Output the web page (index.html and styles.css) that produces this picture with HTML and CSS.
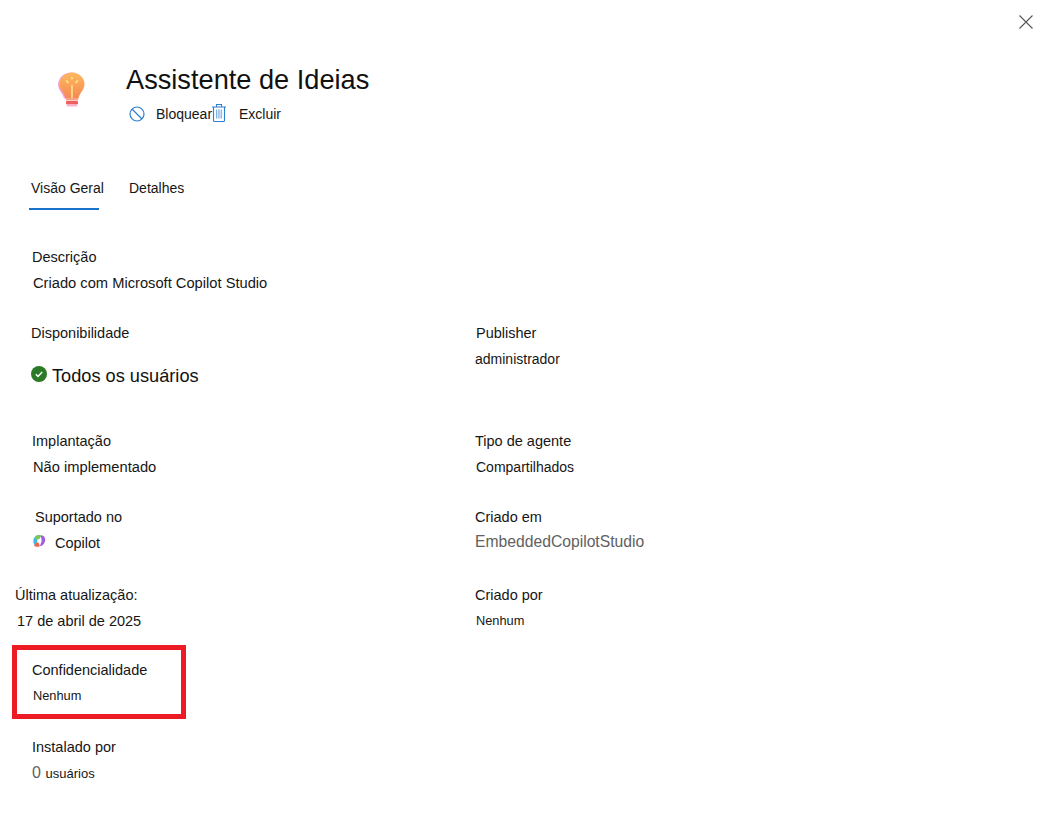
FILE: index.html
```html
<!DOCTYPE html>
<html lang="pt">
<head>
<meta charset="utf-8">
<title>Assistente de Ideias</title>
<link rel="stylesheet" href="styles.css">
</head>
<body>
<div class="panel">
  <div class="topbar">
    <svg class="close" viewBox="0 0 16 16" width="16" height="16"><path d="M1.500 1.500l13 13M14.500 1.500l-13 13" stroke="#555" stroke-width="1.100" fill="none"/></svg>
  </div>
  <header class="header">
    <svg class="bulb" viewBox="0 0 32 40" width="32" height="40">
      <defs>
        <linearGradient id="bg" x1="0" y1="0" x2="0" y2="1"><stop offset="0" stop-color="#fdb95c"/><stop offset="1" stop-color="#f58a55"/></linearGradient>
        <filter id="blur"><feGaussianBlur stdDeviation="0.7"/></filter>
      </defs>
      <g filter="url(#blur)">
        <path d="M16 2C8 2 2.500 7.500 2.500 14c0 4.500 2.500 7 4 9.500 1 1.700 1.500 3 1.800 4.500h13.400c.3-1.500.8-2.800 1.800-4.500 1.500-2.500 4-5 4-9.500C27.500 7.500 23 2 16 2z" fill="#f6a3d8" transform="translate(-.4 .6)"/>
        <path d="M16 2.500C9 2.500 3.500 8 3.500 14c0 4.500 2.500 7 4 9.500 1 1.700 1.500 3 1.800 4.500h13.400c.3-1.500.8-2.800 1.800-4.500 1.500-2.500 4-5 4-9.500C28.500 8 23 2.500 16 2.500z" fill="url(#bg)"/>
        <path d="M16 15v13M10 10.500l2.500 2.500M22 10.500L19.500 13M16 7v2.500" stroke="#fddb86" stroke-width="1.800" fill="none"/>
        <rect x="9.800" y="28" width="12.400" height="2.500" fill="#f7a08a"/>
        <rect x="10" y="31" width="12" height="3.500" rx="1" fill="#ee5f5f"/>
        <rect x="10.500" y="34.500" width="11" height="2" rx="1" fill="#f8b4d6"/>
      </g>
    </svg>
    <div class="head-main">
      <h1 class="title">Assistente de Ideias</h1>
      <div class="actions">
        <span class="action">
          <svg class="action-icon" viewBox="0 0 16 16" width="16" height="16"><circle cx="8" cy="8" r="7" stroke="#2f7fd1" stroke-width="1.200" fill="none"/><path d="M3 3l10 10" stroke="#2f7fd1" stroke-width="1.200"/></svg>
          <span class="action-label">Bloquear</span>
        </span>
        <span class="action">
          <svg class="action-icon trash" viewBox="0 0 16 20" width="16" height="20"><path d="M1 4h14M5.500 4V1.500h5V4M2.500 4v13.500c0 .6.400 1 1 1h9c.6 0 1-.4 1-1V4" stroke="#2f7fd1" stroke-width="1.100" fill="none"/><path d="M5.500 6.500v9M7.200 6.500v9M8.900 6.500v9M10.600 6.500v9" stroke="#7fb1e3" stroke-width="1"/></svg>
          <span class="action-label">Excluir</span>
        </span>
      </div>
    </div>
  </header>
  <nav class="tabs">
    <span class="tab active">Visão Geral</span>
    <span class="tab">Detalhes</span>
  </nav>
  <main class="fields">
    <section class="field wide pl-32">
      <div class="label">Descrição</div>
      <div class="value body-value nudge-1">Criado com Microsoft Copilot Studio</div>
    </section>
    <section class="field row-avail pl-31">
      <div class="label">Disponibilidade</div>
      <div class="status">
        <svg class="status-icon" viewBox="0 0 16 16" width="16" height="16"><circle cx="8" cy="8" r="8" fill="#2b7a26"/><path d="M4.800 8.300l2.200 2.100 4.200-4.300" stroke="#fff" stroke-width="1.500" fill="none"/></svg>
        <span>Todos os usuários</span>
      </div>
    </section>
    <section class="field row-avail">
      <div class="label nudge-1">Publisher</div>
      <div class="value small">administrador</div>
    </section>
    <section class="field pl-32">
      <div class="label">Implantação</div>
      <div class="value body-value nudge-1">Não implementado</div>
    </section>
    <section class="field">
      <div class="label">Tipo de agente</div>
      <div class="value small nudge-1">Compartilhados</div>
    </section>
    <section class="field row-tall pl-35">
      <div class="label">Suportado no</div>
      <div class="value copilot">
        <svg class="copilot-icon" viewBox="0 0 16 16" width="14" height="14">
          <path d="M4 2.500C7 .500 10 1 10 3L7 7 3.500 13C1 11 .800 5 4 2.500z" fill="#3fb8e8"/>
          <path d="M3.500 4C5 1 8.500.500 10.500 2L7 7 4 6z" fill="#7ec850"/>
          <path d="M10 1.500c3.500 0 5.500 2.500 5 6-.5 3.500-3 6.500-6 6.500l2-6z" fill="#a35ee0"/>
          <path d="M5 14.500c-1.500 0-2.500-1-2.500-2L7 8l2 6c-1 .5-2.500.5-4 .5z" fill="#f0654f"/>
          <circle cx="8" cy="8" r="2.200" fill="#fff"/>
        </svg>
        <span>Copilot</span>
      </div>
    </section>
    <section class="field row-tall">
      <div class="label">Criado em</div>
      <div class="value muted">EmbeddedCopilotStudio</div>
    </section>
    <section class="field pl-15">
      <div class="label">Última atualização:</div>
      <div class="value nudge-2">17 de abril de 2025</div>
    </section>
    <section class="field">
      <div class="label">Criado por</div>
      <div class="value xsmall nudge-1">Nenhum</div>
    </section>
    <section class="field wide">
      <div class="highlight">
        <div class="label">Confidencialidade</div>
        <div class="value xsmall nudge-1">Nenhum</div>
      </div>
    </section>
    <section class="field wide pl-32">
      <div class="label">Instalado por</div>
      <div class="value small-count"><span class="count">0</span> usuários</div>
    </section>
  </main>
</div>
</body>
</html>
```
FILE: styles.css
```css
* { box-sizing: border-box; }
html, body { margin: 0; padding: 0; background: #fff; }
body {
  font-family: "Liberation Sans", Arial, sans-serif;
  color: #161616;
  font-size: 14.5px;
  width: 1047px;
  height: 823px;
  overflow: hidden;
}
.panel { display: flex; flex-direction: column; }
.topbar { display: flex; justify-content: flex-end; padding: 14px 13px 0 0; height: 30px; }
.close { display: block; }
.header { display: flex; padding: 38px 0 0 56px; }
.bulb { flex: none; margin-top: 2px; margin-right: 38px; }
.head-main { display: flex; flex-direction: column; }
.title {
  margin: 0;
  font-size: 27.200px;
  font-weight: 400;
  line-height: 36px;
  color: #111;
  margin-top: -6px;
}
.actions { display: flex; margin-top: 6px; margin-left: 3px; height: 20px; }
.action { display: flex; align-items: center; }
.action-icon { flex: none; margin-right: 11px; }
.action:first-child { width: 82px; }
.trash { margin-right: 12px; margin-top: -2px; }
.action-label { font-size: 14px; white-space: nowrap; line-height: 20px; }
.tabs { display: flex; padding: 54px 0 0 29px; }
.tab { height: 32px; line-height: 20px; padding: 0 2px; margin-right: 26px; font-size: 14px; white-space: nowrap; }
.tab.active { border-bottom: 2px solid #1a73c8; width: 70px; margin-right: 28px; }
.fields {
  display: grid;
  grid-template-columns: 475px 1fr;
  margin-top: 37px;
  grid-auto-rows: min-content;
}
.field { height: 76px; }
.wide { grid-column: 1 / -1; }
.row-avail { height: 108px; }
.row-tall { height: 78px; }
.pl-15 { padding-left: 15px; }
.pl-31 { padding-left: 31px; }
.pl-32 { padding-left: 32px; }
.pl-35 { padding-left: 35px; }
.label { line-height: 20px; height: 26px; white-space: nowrap; }
.value { line-height: 20px; white-space: nowrap; }
.body-value { font-size: 14.700px; }
.nudge-1 { margin-left: 1px; }
.nudge-2 { margin-left: 2px; }
.small { font-size: 14px; }
.small-count { font-size: 13px; }
.xsmall { font-size: 12.800px; }
.muted { color: #616161; font-size: 15.700px; margin-top: -1px; }
.status { display: flex; align-items: center; margin-top: 15px; font-size: 18.200px; line-height: 24px; color: #111; }
.status-icon { margin-right: 5px; margin-top: -4px; flex: none; }
.copilot { display: flex; align-items: center; margin-left: -3px; }
.copilot-icon { margin-right: 9px; margin-top: -4px; flex: none; }
.count { color: #616161; font-size: 16px; margin-right: 1px; }
.highlight {
  margin: -16px 0 0 12px;
  width: 174px;
  height: 74px;
  border: 5px solid #ed1c24;
  padding: 10px 0 0 15px;
}
```
